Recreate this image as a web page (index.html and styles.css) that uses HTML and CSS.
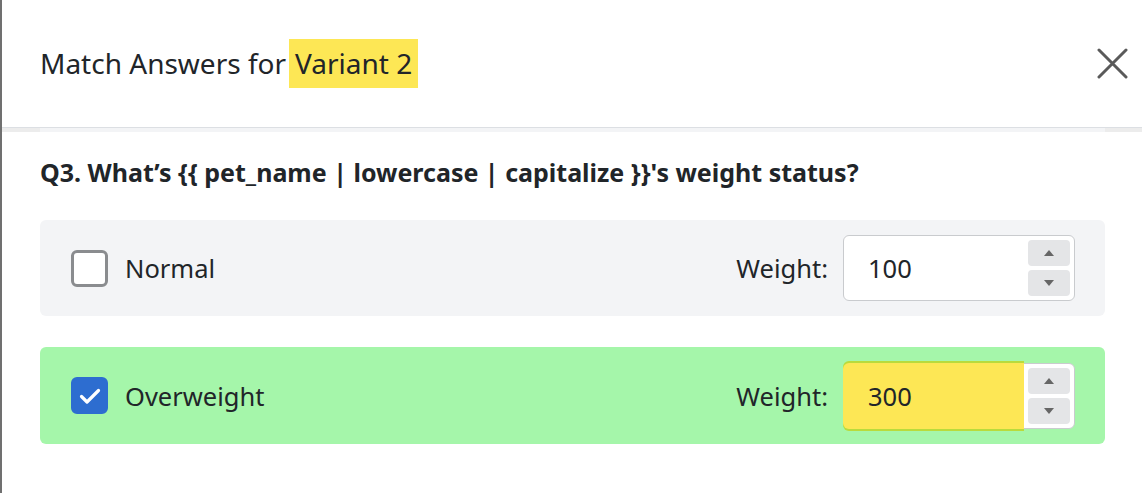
FILE: index.html
```html
<!DOCTYPE html>
<html lang="en">
<head>
<meta charset="utf-8">
<title>Match Answers</title>
<link rel="stylesheet" href="styles.css">
</head>
<body>
<div class="modal">
  <header class="modal-header">
    <h1 class="title">Match Answers for<mark class="hl">Variant 2</mark></h1>
    <button class="close" aria-label="Close">
      <svg width="31" height="31" viewBox="0 0 31 31"><path d="M2 2 L29 29 M29 2 L2 29" stroke="#5a5a5a" stroke-width="3" stroke-linecap="round" fill="none"/></svg>
    </button>
  </header>
  <div class="strip"><div class="strip-inner"></div></div>
  <main class="modal-body">
    <h2 class="question">Q3. What’s {{ pet_name | lowercase | capitalize }}'s weight status?</h2>
    <div class="options">
      <div class="option">
        <label class="choice">
          <span class="check"></span>
          <span class="choice-label">Normal</span>
        </label>
        <div class="weight">
          <span class="weight-label">Weight:</span>
          <div class="field">
            <div class="field-value">100</div>
            <div class="spin">
              <span class="spin-btn"><svg width="10" height="6" viewBox="0 0 10 6"><path d="M0 6 L5 0 L10 6 Z" fill="#666"/></svg></span>
              <span class="spin-btn"><svg width="10" height="6" viewBox="0 0 10 6"><path d="M0 0 L5 6 L10 0 Z" fill="#666"/></svg></span>
            </div>
          </div>
        </div>
      </div>
      <div class="option option-correct">
        <label class="choice">
          <span class="check check-on">
            <svg width="24" height="20" viewBox="0 0 24 20"><path d="M3.5 10.5 L9 16 L20.5 4.5" stroke="#fff" stroke-width="3.2" stroke-linecap="round" stroke-linejoin="round" fill="none"/></svg>
          </span>
          <span class="choice-label">Overweight</span>
        </label>
        <div class="weight">
          <span class="weight-label">Weight:</span>
          <div class="field">
            <div class="field-value field-hl">300</div>
            <div class="spin">
              <span class="spin-btn"><svg width="10" height="6" viewBox="0 0 10 6"><path d="M0 6 L5 0 L10 6 Z" fill="#666"/></svg></span>
              <span class="spin-btn"><svg width="10" height="6" viewBox="0 0 10 6"><path d="M0 0 L5 6 L10 0 Z" fill="#666"/></svg></span>
            </div>
          </div>
        </div>
      </div>
    </div>
  </main>
</div>
</body>
</html>
```

FILE: styles.css
```css
html, body {
  margin: 0;
  height: 100%;
}
body {
  background: #fff;
  font-family: "Noto Sans", "Open Sans", sans-serif;
  color: #212529;
}
.modal {
  min-height: 100%;
  border-left: 2px solid #707070;
  box-sizing: border-box;
}
.modal-header {
  height: 128px;
  box-sizing: border-box;
  display: flex;
  align-items: center;
  justify-content: space-between;
  padding: 0 14px 0 38px;
  border-bottom: 1px solid #dcdfe3;
}
.title {
  margin: 0;
  font-size: 28px;
  font-weight: 400;
  line-height: 49px;
}
.hl {
  background: #fde755;
  color: #212529;
  padding: 0 6px;
  margin-left: 3px;
  display: inline-block;
  line-height: 49px;
}
.close {
  border: 0;
  background: none;
  padding: 0;
  width: 31px;
  height: 31px;
  display: flex;
}
.strip {
  height: 4px;
  background: #ececec;
  padding: 0 37px 0 38px;
}
.strip-inner {
  height: 4px;
  background: #f3f4f6;
}
.modal-body {
  padding: 0 37px 0 38px;
}
.question {
  margin: 0;
  padding-top: 24px;
  font-size: 25px;
  font-weight: 700;
  line-height: 32px;
}
.options {
  display: flex;
  flex-direction: column;
  gap: 31px;
  margin-top: 32px;
}
.option {
  height: 96px;
  box-sizing: border-box;
  border-radius: 6px;
  background: #f3f4f6;
  display: flex;
  align-items: center;
  justify-content: space-between;
  padding: 0 30px 0 31px;
}
.option-correct {
  background: #a5f6aa;
  height: 97px;
}
.choice {
  display: flex;
  align-items: center;
  gap: 17px;
}
.check {
  width: 37px;
  height: 37px;
  box-sizing: border-box;
  border: 3px solid #8a8c8f;
  border-radius: 6px;
  background: #fff;
  display: flex;
  align-items: center;
  justify-content: center;
}
.check-on {
  background: #2d6dd0;
  border-color: #2d6dd0;
}
.choice-label {
  font-size: 25.5px;
  line-height: 32px;
}
.weight {
  display: flex;
  align-items: center;
  gap: 15px;
}
.weight-label {
  font-size: 25.5px;
  line-height: 32px;
}
.field {
  width: 232px;
  height: 66px;
  box-sizing: border-box;
  border: 1px solid #c9cbce;
  border-radius: 6px;
  background: #fff;
  display: flex;
  align-items: stretch;
}
.field-value {
  flex: 1;
  display: flex;
  align-items: center;
  padding-left: 24px;
  font-size: 25.5px;
}
.field-hl {
  box-sizing: border-box;
  background: #fde755;
  margin: -1px 0 -1px -1px;
  padding-left: 25px;
  border-radius: 6px 0 0 6px;
  box-shadow: 0 -2px 0 #b9db3c, 0 2px 0 #b9db3c;
  flex: 0 0 181px;
}
.spin {
  box-sizing: border-box;
  width: 46px;
  flex-shrink: 0;
  display: flex;
  flex-direction: column;
  gap: 4px;
  padding: 4px 4px 4px 0;
  margin-left: auto;
}
.spin-btn {
  flex: 1;
  background: #e4e5e7;
  border-radius: 4px;
  display: flex;
  align-items: center;
  justify-content: center;
}
```
